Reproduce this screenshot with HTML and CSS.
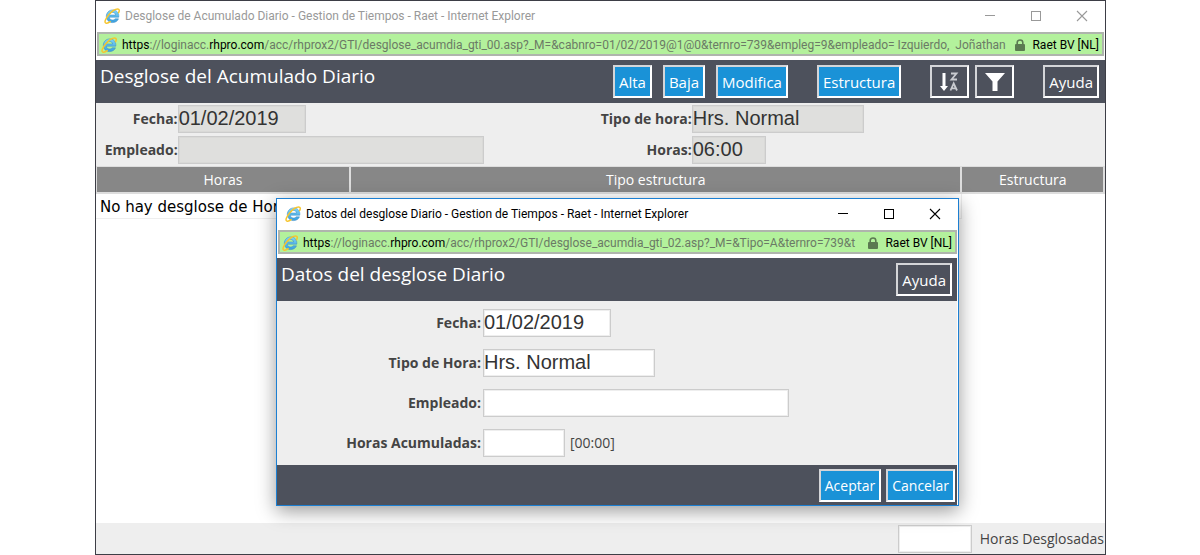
FILE: index.html
```
<!DOCTYPE html>
<html lang="es">
<head>
<meta charset="utf-8">
<title>Desglose de Acumulado Diario</title>
<link rel="stylesheet" href="styles.css">
</head>
<body>
<svg class="defs" aria-hidden="true">
  <defs>
    <linearGradient id="eBlue" x1="0" y1="0" x2="0" y2="1">
      <stop offset="0" stop-color="#7fd4f7"/>
      <stop offset="1" stop-color="#3a9fdd"/>
    </linearGradient>
  </defs>
  <symbol id="ie" viewBox="0 0 16 16">
    <path d="M5.3 9.2H14.8C15.3 4.6 12.4 1.9 8.7 1.9C5 1.9 2.3 4.7 2.3 8.3C2.3 12 5 14.6 8.6 14.6C11.5 14.6 13.7 13.1 14.5 10.8H11.1C10.6 11.6 9.8 12 8.7 12C6.8 12 5.4 10.9 5.3 9.2ZM5.4 7C5.7 5.4 6.9 4.5 8.6 4.500C10.3 4.5 11.4 5.4 11.6 7Z" fill="url(#eBlue)" stroke="#3588c4" stroke-width=".5" fill-rule="evenodd"/>
    <path d="M14.6 4.6C15.7 2.4 15.4 .9 13.7 .9C11.4 .9 7.5 3.4 4.6 7C1.6 10.7 .2 14 1.6 15C2.5 15.6 4.3 15 6.2 13.7" fill="none" stroke="#f6c52e" stroke-width="1.5" stroke-linecap="round"/>
  </symbol>
  <symbol id="lock" viewBox="0 0 10 12">
    <path d="M2.2 6V3.6C2.2 .2 7.8 .2 7.8 3.6V6" fill="none" stroke="#5b7a51" stroke-width="1.6"/>
    <rect x="0" y="5" width="10" height="7" rx="1" fill="#5b7a51"/>
  </symbol>
  <symbol id="min" viewBox="0 0 12 12"><path d="M1 5.5H11" stroke="currentColor"/></symbol>
  <symbol id="max" viewBox="0 0 12 12"><rect x="1.5" y="1.5" width="9" height="9" fill="none" stroke="currentColor"/></symbol>
  <symbol id="close" viewBox="0 0 12 12"><path d="M1 1L11 11M11 1L1 11" fill="none" stroke="currentColor" stroke-width="1.1"/></symbol>
</svg>

<main class="window">
  <div class="titlebar titlebar-idle">
    <svg class="ie"><use href="#ie"/></svg>
    <span class="caption">Desglose de Acumulado Diario - Gestion de Tiempos - Raet - Internet Explorer</span>
    <div class="controls">
      <button type="button" aria-label="Minimizar"><svg><use href="#min"/></svg></button>
      <button type="button" aria-label="Maximizar"><svg><use href="#max"/></svg></button>
      <button type="button" aria-label="Cerrar"><svg><use href="#close"/></svg></button>
    </div>
  </div>
  <div class="address">
    <svg class="ie"><use href="#ie"/></svg>
    <span class="url"><b>https</b>://loginacc.<b>rhpro.com</b>/acc/rhprox2/GTI/desglose_acumdia_gti_00.asp?_M=&amp;cabnro=01/02/2019@1@0&amp;ternro=739&amp;empleg=9&amp;empleado= Izquierdo,&nbsp; Joñathan</span>
    <svg class="lock"><use href="#lock"/></svg>
    <span class="owner">Raet BV [NL]</span>
  </div>
  <header class="bar">
    <h1>Desglose del Acumulado Diario</h1>
    <nav class="groups">
      <div class="group group-wide">
        <button type="button" class="btn btn-blue">Alta</button>
        <button type="button" class="btn btn-blue">Baja</button>
        <button type="button" class="btn btn-blue">Modifica</button>
      </div>
      <div class="group">
        <button type="button" class="btn btn-blue">Estructura</button>
      </div>
      <div class="group">
        <button type="button" class="btn btn-icon" aria-label="Ordenar">
          <svg viewBox="0 0 20 22">
            <path d="M2.500 2H5.500V15H8L4 20L0 15H2.500Z" fill="#fff"/>
            <path d="M11 2.500H16.500L11.500 8.500H17M10.500 19.500L13.700 12.500L17 19.500M11.800 17.300H15.700" fill="none" stroke="#c9cbd0" stroke-width="1.8"/>
          </svg>
        </button>
        <button type="button" class="btn btn-icon" aria-label="Filtrar">
          <svg viewBox="0 0 20 22"><path d="M0 2H20L12.500 10.500V20H7.500V10.500Z" fill="#fff"/></svg>
        </button>
      </div>
      <div class="group">
        <button type="button" class="btn">Ayuda</button>
      </div>
    </nav>
  </header>
  <form class="summary">
    <label for="fecha">Fecha:</label>
    <input class="field field-date" id="fecha" value="01/02/2019" readonly>
    <label for="tipo">Tipo de hora:</label>
    <input class="field field-type" id="tipo" value="Hrs. Normal" readonly>
    <label for="empleado">Empleado:</label>
    <input class="field field-name" id="empleado" readonly>
    <label for="horas">Horas:</label>
    <input class="field field-hours" id="horas" value="06:00" readonly>
  </form>
  <table class="list">
    <colgroup><col class="col-hours"><col class="col-type"><col></colgroup>
    <thead><tr><th>Horas</th><th>Tipo estructura</th><th>Estructura</th></tr></thead>
    <tbody><tr><td colspan="2">No hay desglose de Horas</td></tr></tbody>
  </table>
  <footer class="totals">
    <input class="field field-hours" id="total">
    <label for="total">Horas Desglosadas</label>
  </footer>

  <section class="dialog" role="dialog" aria-label="Datos del desglose Diario">
    <div class="titlebar">
      <svg class="ie"><use href="#ie"/></svg>
      <span class="caption">Datos del desglose Diario - Gestion de Tiempos - Raet - Internet Explorer</span>
      <div class="controls">
        <button type="button" aria-label="Minimizar"><svg><use href="#min"/></svg></button>
        <button type="button" aria-label="Maximizar"><svg><use href="#max"/></svg></button>
        <button type="button" aria-label="Cerrar"><svg><use href="#close"/></svg></button>
      </div>
    </div>
    <div class="address">
      <svg class="ie"><use href="#ie"/></svg>
      <span class="url"><b>https</b>://loginacc.<b>rhpro.com</b>/acc/rhprox2/GTI/desglose_acumdia_gti_02.asp?_M=&amp;Tipo=A&amp;ternro=739&amp;t</span>
      <svg class="lock"><use href="#lock"/></svg>
      <span class="owner">Raet BV [NL]</span>
    </div>
    <header class="bar">
      <h2>Datos del desglose Diario</h2>
      <button type="button" class="btn">Ayuda</button>
    </header>
    <form class="detail">
      <label for="d-fecha">Fecha:</label>
      <div><input class="field field-date" id="d-fecha" value="01/02/2019"></div>
      <label for="d-tipo">Tipo de Hora:</label>
      <div><input class="field field-type" id="d-tipo" value="Hrs. Normal"></div>
      <label for="d-empleado">Empleado:</label>
      <div><input class="field field-name" id="d-empleado"></div>
      <label for="d-horas">Horas Acumuladas:</label>
      <div class="with-hint"><input class="field field-short" id="d-horas"><span>[00:00]</span></div>
    </form>
    <footer class="actions">
      <button type="button" class="btn btn-blue btn-small">Aceptar</button>
      <button type="button" class="btn btn-blue btn-small">Cancelar</button>
    </footer>
  </section>
</main>
</body>
</html>
```
FILE: styles.css
```
* { box-sizing: border-box; }

body {
  margin: 0;
  padding: 0 94px 0 95px;
  background: #fff;
  color: #444;
  font: 14px/20px "Open Sans", "Noto Sans", sans-serif;
}

.defs { position: absolute; width: 0; height: 0; }

.window {
  position: relative;
  display: flex;
  flex-direction: column;
  min-height: 100vh;
  border: 1px solid #3d3e46;
  background: #fff;
}

/* Browser chrome */
.titlebar {
  display: flex;
  align-items: center;
  height: 31px;
  padding: 0 17px 2px 8px;
  color: #000;
  font: 12px/16px Roboto, sans-serif;
}
.titlebar-idle { color: #999; }
.ie { flex: none; width: 16px; height: 16px; }
.caption { flex: 1; padding-left: 5px; white-space: nowrap; }
.controls { display: flex; gap: 34px; }
.controls button {
  width: 12px;
  height: 12px;
  padding: 0;
  border: 0;
  background: none;
  color: inherit;
}
.controls svg { display: block; width: 12px; height: 12px; }

.address {
  display: flex;
  align-items: center;
  height: 24px;
  margin: 0 1px 4px;
  padding: 1px 3px 0 2px;
  border: 2px solid #afb5ad;
  background: #b3f19c;
  color: #6b7a66;
  font: 12px/16px Roboto, sans-serif;
}
.url {
  flex: 1;
  min-width: 0;
  margin: 0 8px 0 5px;
  overflow: hidden;
  white-space: nowrap;
}
.url b, .owner { color: #000; font-weight: 400; }
.lock { flex: none; width: 10px; height: 12px; margin-right: 7px; }

/* Page header */
.bar {
  display: flex;
  justify-content: space-between;
  height: 43px;
  padding: 5px 5px 5px 4px;
  background: #4d515c;
}
.bar h1, .bar h2 {
  margin: 0;
  color: #fff;
  font-size: 19px;
  font-weight: 400;
  line-height: 22px;
}
.groups { display: flex; gap: 29px; padding-right: 1px; }
.group { display: flex; gap: 6px; }
.group-wide { gap: 11px; }

.btn {
  height: 33px;
  padding: 0 4px;
  border: 2px solid;
  border-color: #d4d5d8 #fff #fff #d4d5d8;
  background: none;
  color: #fff;
  font: 15px/20px "Open Sans", sans-serif;
}
.btn-blue { background: #1a92d7; }
.btn-small { padding: 0 4px; font-size: 14px; }
.btn-icon { width: 39px; padding: 0 8px; }
.btn-icon svg { display: block; width: 20px; height: 22px; }

/* Fields */
.field {
  height: 28px;
  padding: 0 0 1px;
  border: 1px solid #ccc;
  box-shadow: inset 0 0 0 1px #eee;
  background: #fff;
  color: #333;
  font: 20px/24px "Liberation Sans", Arial, sans-serif;
}
.field:read-only { background: #dfdfdd; box-shadow: inset 0 0 0 1px #d9d9d7; }
.field-date { width: 128px; }
.field-type { width: 172px; }
.field-name { width: 306px; }
.field-hours { width: 74px; }
.field-short { width: 82px; }

.summary label, .detail label { text-align: right; font-weight: 700; white-space: nowrap; }

.summary {
  display: grid;
  grid-template-columns: 8fr 41fr 10fr 41fr;
  align-items: center;
  row-gap: 3px;
  padding: 2px 0 2px 1px;
  background: #eee;
}

/* List */
.list { width: 100%; border-spacing: 0; table-layout: fixed; }
.col-hours { width: 255px; }
.col-type { width: 60.6%; }
.list th {
  height: 28px;
  padding: 0;
  border: solid #ddd;
  border-width: 1px 2px 2px 0;
  background: #878787;
  color: #fff;
  font-weight: 400;
}
.list th:first-child { border-left: 1px solid #ddd; }
.list td {
  height: 25px;
  padding: 2px 4px 0;
  border: solid #eee;
  border-width: 0 1px 1px 0;
  color: #000;
  font: 15px/20px "DejaVu Sans", Verdana, sans-serif;
}

.totals {
  display: flex;
  align-items: center;
  justify-content: flex-end;
  gap: 8px;
  margin-top: auto;
  padding: 2px 1px 1px 0;
  background: #eee;
}

/* Child window, floating over the main one */
.dialog {
  position: absolute;
  top: 197px;
  left: 180px;
  width: 683px;
  border: 1px solid #1c7fd2;
  background: #fff;
  box-shadow: 0 5px 18px rgba(0, 0, 0, .4);
}
.dialog .bar, .dialog .detail, .dialog .actions { margin-right: 1px; }

.detail {
  display: grid;
  grid-template-columns: 30% 1fr;
  align-items: center;
  gap: 12px 2px;
  padding: 8px 0;
  background: #eee;
}
.detail .field { display: block; }
.with-hint { display: flex; align-items: center; gap: 5px; }

.actions {
  display: flex;
  justify-content: flex-end;
  gap: 5px;
  padding: 4px 2px 3px;
  background: #4d515c;
}
```
